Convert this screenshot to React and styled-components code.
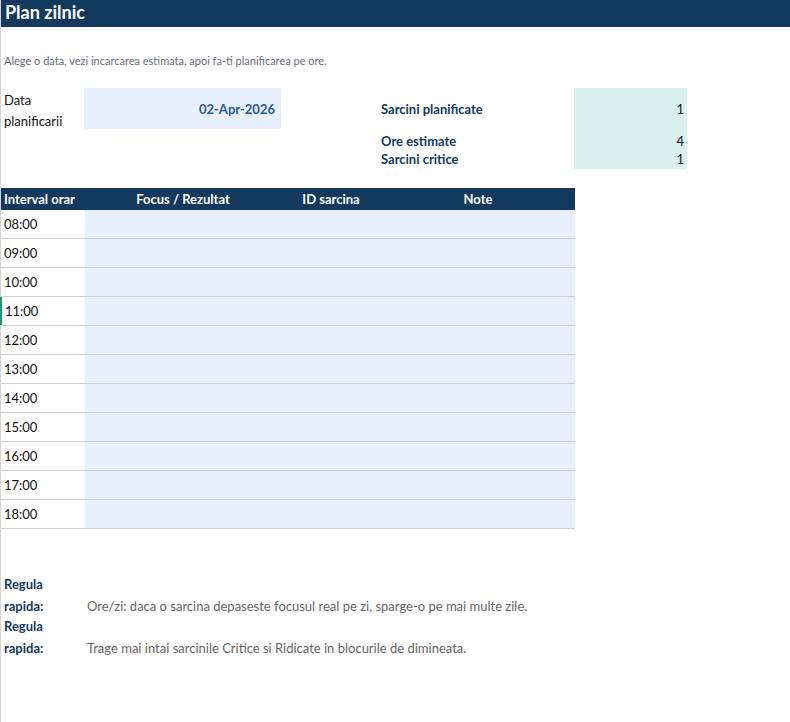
import React from "react";
import styled, { createGlobalStyle } from "styled-components";

const G = createGlobalStyle`
  body { margin:0; background:#fff; font-family: Lato, "Noto Sans", sans-serif; }
`;
const Page = styled.div`width:790px;height:722px;border-left:1px solid #d4d4d4;box-sizing:border-box;`;
const Title = styled.div`background:#133a5e;color:#fff;font-weight:700;font-size:18px;height:27px;line-height:25px;padding-left:4px;`;
const Sub = styled.div`color:#6b6b7a;font-size:11px;margin-top:27px;height:14px;line-height:14px;padding-left:3px;`;
const Top = styled.div`display:flex;margin-top:20px;height:81px;`;
const DateBlock = styled.div`display:flex;align-items:flex-start;width:380px;`;
const DateLabel = styled.div`width:80px;padding-left:3px;font-size:13px;line-height:21px;color:#111;padding-top:2px;`;
const DateVal = styled.div`width:191px;height:41px;background:#e8f0fd;color:#2a5a96;font-weight:700;font-size:13px;display:flex;align-items:center;justify-content:flex-end;padding-right:6px;`;
const Stats = styled.div`display:grid;grid-template-columns:193px 113px;grid-template-rows:42px 19px 20px;`;
const SLabel = styled.div`color:#133a5e;font-weight:700;font-size:13px;display:flex;align-items:${p=>p.$a||"center"};`;
const SVal = styled.div`background:#daf0ec;font-size:13px;color:#111;display:flex;justify-content:flex-end;align-items:${p=>p.$a||"center"};padding-right:3px;`;
const Table = styled.div`margin-top:19px;width:574px;`;
const Head = styled.div`display:grid;grid-template-columns:84px 196px 100px 194px;background:#133a5e;color:#fff;font-weight:700;font-size:13px;height:22px;align-items:center;`;
const HCell = styled.div`text-align:${p=>p.$l?"left":"center"};padding-left:${p=>p.$l?"3px":"0"};`;
const Row = styled.div`display:grid;grid-template-columns:84px 490px;height:29px;border-bottom:1px solid #d0d0d0;box-sizing:border-box;`;
const Time = styled.div`font-size:13px;color:#111;display:flex;align-items:center;padding-left:3px;border-left:${p=>p.$g?"2px solid #1a9a6a":"none"};margin-left:${p=>p.$g?"-1px":"0"};`;
const Fill = styled.div`background:#e8f0fd;`;
const Rules = styled.div`margin-top:44px;`;
const Rule = styled.div`display:grid;grid-template-columns:86px 1fr;height:42px;`;
const RLabel = styled.div`color:#133a5e;font-weight:700;font-size:13px;line-height:22px;padding-left:3px;`;
const RText = styled.div`color:#666;font-size:13px;align-self:end;line-height:22px;padding-bottom:0;`;

const times=["08:00","09:00","10:00","11:00","12:00","13:00","14:00","15:00","16:00","17:00","18:00"];
export default function App(){
  return <Page><G/>
    <Title>Plan zilnic</Title>
    <Sub>Alege o data, vezi incarcarea estimata, apoi fa-ti planificarea pe ore.</Sub>
    <Top>
      <DateBlock><DateLabel>Data<br/>planificarii</DateLabel><DateVal>02-Apr-2026</DateVal></DateBlock>
      <Stats>
        <SLabel>Sarcini planificate</SLabel><SVal>1</SVal>
        <SLabel $a="flex-end">Ore estimate</SLabel><SVal $a="flex-end">4</SVal>
        <SLabel>Sarcini critice</SLabel><SVal>1</SVal>
      </Stats>
    </Top>
    <Table>
      <Head><HCell $l>Interval orar</HCell><HCell>Focus / Rezultat</HCell><HCell>ID sarcina</HCell><HCell>Note</HCell></Head>
      {times.map(t=><Row key={t}><Time $g={t==="11:00"}>{t}</Time><Fill/></Row>)}
    </Table>
    <Rules>
      <Rule><RLabel>Regula<br/>rapida:</RLabel><RText>Ore/zi: daca o sarcina depaseste focusul real pe zi, sparge-o pe mai multe zile.</RText></Rule>
      <Rule><RLabel>Regula<br/>rapida:</RLabel><RText>Trage mai intai sarcinile Critice si Ridicate in blocurile de dimineata.</RText></Rule>
    </Rules>
  </Page>;
}
